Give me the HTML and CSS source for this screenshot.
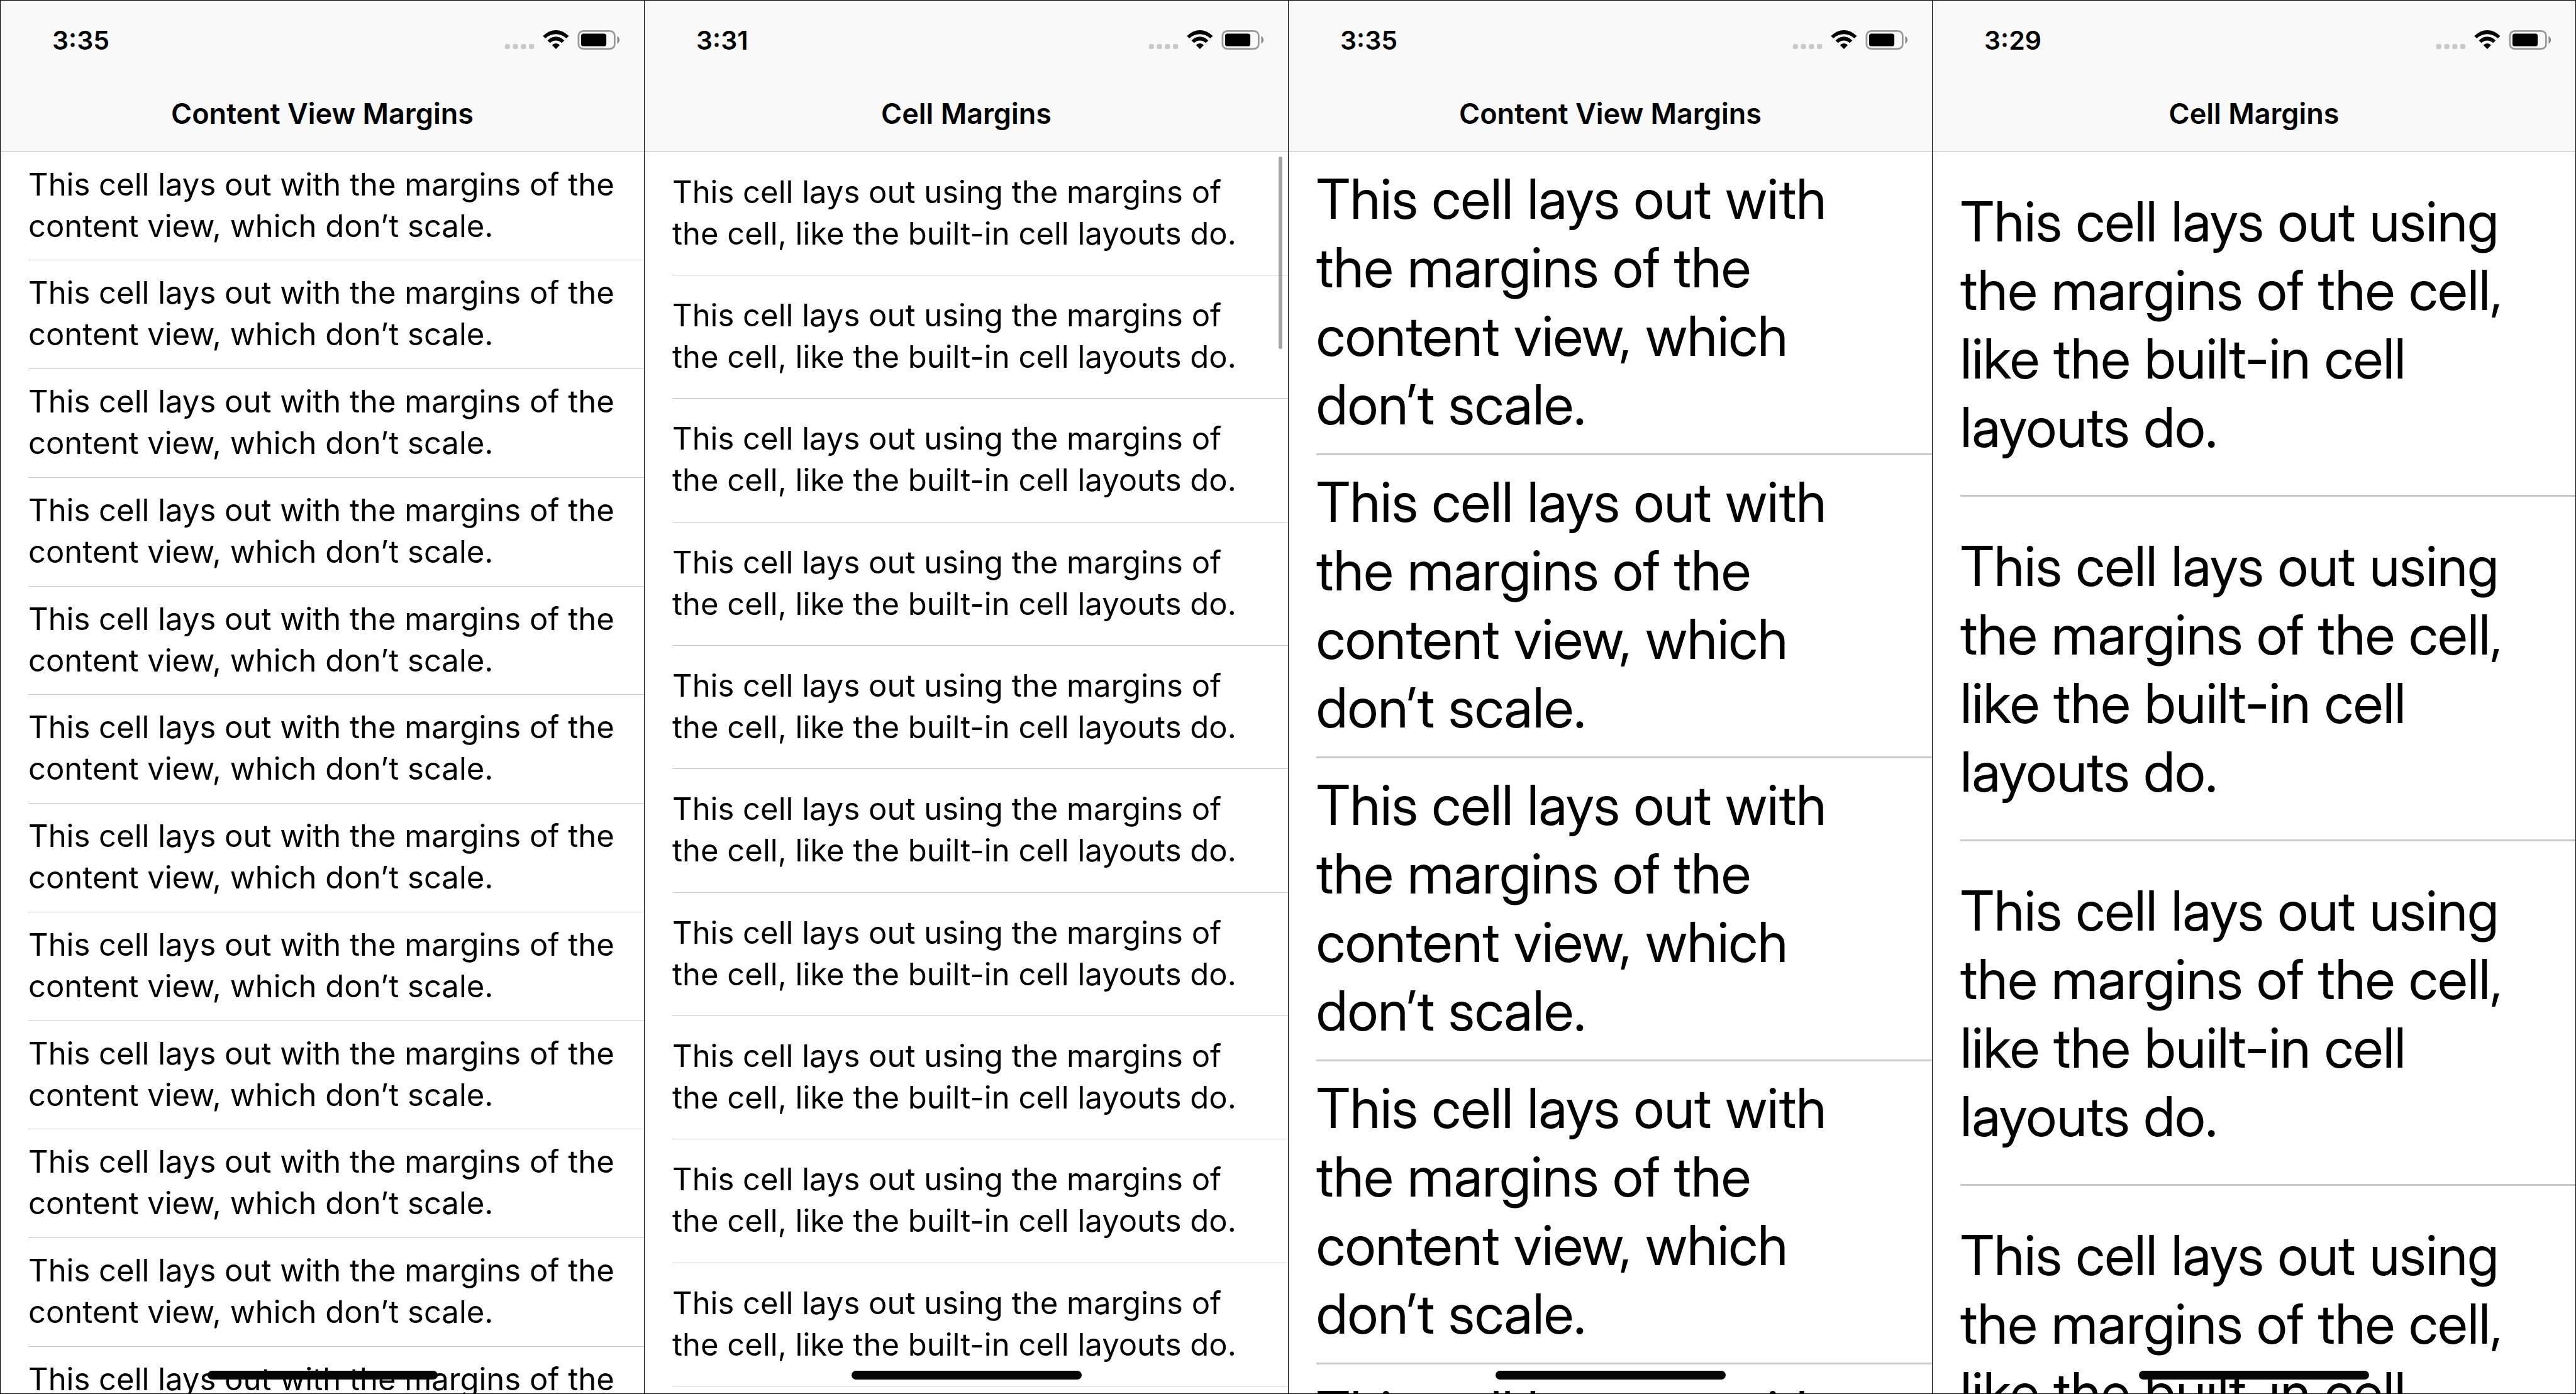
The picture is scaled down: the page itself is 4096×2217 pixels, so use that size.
FILE: index.html
```html
<!DOCTYPE html>
<html lang="en">
<head>
<meta charset="utf-8">
<title>Content View Margins and Cell Margins</title>
<link rel="stylesheet" href="styles.css">
</head>
<body>
<svg class="symbols" aria-hidden="true">
  <symbol id="status" viewBox="0 0 204 36">
    <g fill="#c8c8c8">
      <rect x="3" y="25" width="9" height="9" rx="3"/>
      <rect x="17" y="25" width="9" height="9" rx="3"/>
      <rect x="31" y="25" width="9" height="9" rx="3"/>
      <rect x="45" y="25" width="9" height="9" rx="3"/>
    </g>
    <path d="M69.4 11.2Q80 1 92 1T114.600 11.200L110.400 15.200Q102 7.800 92 7.800T73.600 15.200Z"/>
    <path d="M77.400 19Q84 12.200 92 12.200T106.600 19L102.200 23.200Q98 19 92 19T81.800 23.200Z"/>
    <path d="M85.200 27Q88 24 92 24T98.800 27L92 34Z"/>
    <rect x="131.500" y="2.500" width="63" height="31" rx="8" fill="none" stroke="#999" stroke-width="3"/>
    <rect x="136" y="7" width="44" height="22" rx="4"/>
    <path d="M199 11.500Q203 13.500 203 18T199 24.500Z" fill="#8c8c8c"/>
  </symbol>
</svg>
<main class="phones">
  <section class="phone">
    <header class="bar">
      <div class="status"><time>3:35</time><svg class="icons"><use href="#status"/></svg></div>
      <h1>Content View Margins</h1>
    </header>
    <ul class="list compact content">
      <li>This cell lays out with the margins of the<br>content view, which don’t scale.</li>
      <li>This cell lays out with the margins of the<br>content view, which don’t scale.</li>
      <li>This cell lays out with the margins of the<br>content view, which don’t scale.</li>
      <li>This cell lays out with the margins of the<br>content view, which don’t scale.</li>
      <li>This cell lays out with the margins of the<br>content view, which don’t scale.</li>
      <li>This cell lays out with the margins of the<br>content view, which don’t scale.</li>
      <li>This cell lays out with the margins of the<br>content view, which don’t scale.</li>
      <li>This cell lays out with the margins of the<br>content view, which don’t scale.</li>
      <li>This cell lays out with the margins of the<br>content view, which don’t scale.</li>
      <li>This cell lays out with the margins of the<br>content view, which don’t scale.</li>
      <li>This cell lays out with the margins of the<br>content view, which don’t scale.</li>
      <li>This cell lays out with the margins of the<br>content view, which don’t scale.</li>
    </ul>
    <div class="home"></div>
  </section>
  <section class="phone">
    <header class="bar">
      <div class="status"><time>3:31</time><svg class="icons"><use href="#status"/></svg></div>
      <h1>Cell Margins</h1>
    </header>
    <ul class="list compact cell">
      <li>This cell lays out using the margins of<br>the cell, like the built-in cell layouts do.</li>
      <li>This cell lays out using the margins of<br>the cell, like the built-in cell layouts do.</li>
      <li>This cell lays out using the margins of<br>the cell, like the built-in cell layouts do.</li>
      <li>This cell lays out using the margins of<br>the cell, like the built-in cell layouts do.</li>
      <li>This cell lays out using the margins of<br>the cell, like the built-in cell layouts do.</li>
      <li>This cell lays out using the margins of<br>the cell, like the built-in cell layouts do.</li>
      <li>This cell lays out using the margins of<br>the cell, like the built-in cell layouts do.</li>
      <li>This cell lays out using the margins of<br>the cell, like the built-in cell layouts do.</li>
      <li>This cell lays out using the margins of<br>the cell, like the built-in cell layouts do.</li>
      <li>This cell lays out using the margins of<br>the cell, like the built-in cell layouts do.</li>
    </ul>
    <div class="scroller"></div>
    <div class="home"></div>
  </section>
  <section class="phone">
    <header class="bar">
      <div class="status"><time>3:35</time><svg class="icons"><use href="#status"/></svg></div>
      <h1>Content View Margins</h1>
    </header>
    <ul class="list large content">
      <li>This cell lays out with<br>the margins of the<br>content view, which<br>don’t scale.</li>
      <li>This cell lays out with<br>the margins of the<br>content view, which<br>don’t scale.</li>
      <li>This cell lays out with<br>the margins of the<br>content view, which<br>don’t scale.</li>
      <li>This cell lays out with<br>the margins of the<br>content view, which<br>don’t scale.</li>
      <li>This cell lays out with<br>the margins of the<br>content view, which<br>don’t scale.</li>
    </ul>
    <div class="home"></div>
  </section>
  <section class="phone">
    <header class="bar">
      <div class="status"><time>3:29</time><svg class="icons"><use href="#status"/></svg></div>
      <h1>Cell Margins</h1>
    </header>
    <ul class="list large cell">
      <li>This cell lays out using<br>the margins of the cell,<br>like the built-in cell<br>layouts do.</li>
      <li>This cell lays out using<br>the margins of the cell,<br>like the built-in cell<br>layouts do.</li>
      <li>This cell lays out using<br>the margins of the cell,<br>like the built-in cell<br>layouts do.</li>
      <li>This cell lays out using<br>the margins of the cell,<br>like the built-in cell<br>layouts do.</li>
    </ul>
    <div class="home"></div>
  </section>
</main>
</body>
</html>
```
FILE: styles.css
```css
* {
  box-sizing: border-box;
}

body {
  margin: 0;
  background: #fff;
  color: #000;
  font-family: Inter, "Liberation Sans", sans-serif;
}

.symbols {
  position: absolute;
  width: 0;
  height: 0;
}

.phones {
  display: grid;
  grid-template-columns: repeat(4, 1fr);
  height: 100vh;
}

.phone {
  position: relative;
  display: flex;
  flex-direction: column;
  min-width: 0;
  min-height: 0;
  overflow: hidden;
  border: solid #000;
  border-width: 1px 0 1px 1px;
}

.phone:last-child {
  border-right-width: 1px;
}

.bar {
  flex: none;
  padding-bottom: 5px;
  background: #f9f9f9;
  border-bottom: 1px solid #b3b3b3;
}

.status {
  display: flex;
  align-items: center;
  justify-content: space-between;
  height: 125px;
  padding: 0 38px 0 82px;
  font-size: 41px;
  font-weight: 600;
}

.icons {
  width: 186px;
  height: 33px;
}

h1 {
  margin: 0;
  font-size: 45px;
  font-weight: 600;
  line-height: 110px;
  text-align: center;
}

.list {
  flex: 1;
  min-height: 0;
  margin: 0;
  padding: 0 0 0 44px;
  overflow: hidden;
  list-style: none;
  white-space: nowrap;
}

.compact {
  font-size: 49px;
  line-height: 66px;
}

.compact li {
  border-bottom: 1px solid #c8c7cc;
}

.large {
  font-family: "Inter Display", Inter, "Liberation Sans", sans-serif;
  font-size: 88px;
  line-height: 109px;
}

.large li {
  border-bottom: 3px solid #c8c7cc;
}

.compact.content li {
  height: 173px;
  padding-top: 19px;
}

.compact.content li:nth-child(4n + 1) {
  height: 172px;
}

.compact.cell li {
  height: 196px;
  padding-top: 31px;
}

.compact.cell li:nth-child(3n) {
  height: 197px;
}

.large.content li {
  padding: 20px 0 23px;
}

.large.cell li {
  padding: 56px 0 53px;
}

.scroller {
  position: absolute;
  top: 248px;
  right: 9px;
  width: 6px;
  height: 306px;
  border-radius: 3px;
  background: rgba(0, 0, 0, 0.35);
}

.home {
  position: absolute;
  bottom: 22px;
  left: 50%;
  width: 366px;
  height: 14px;
  border-radius: 7px;
  background: #050505;
  transform: translateX(-50%);
}
```
